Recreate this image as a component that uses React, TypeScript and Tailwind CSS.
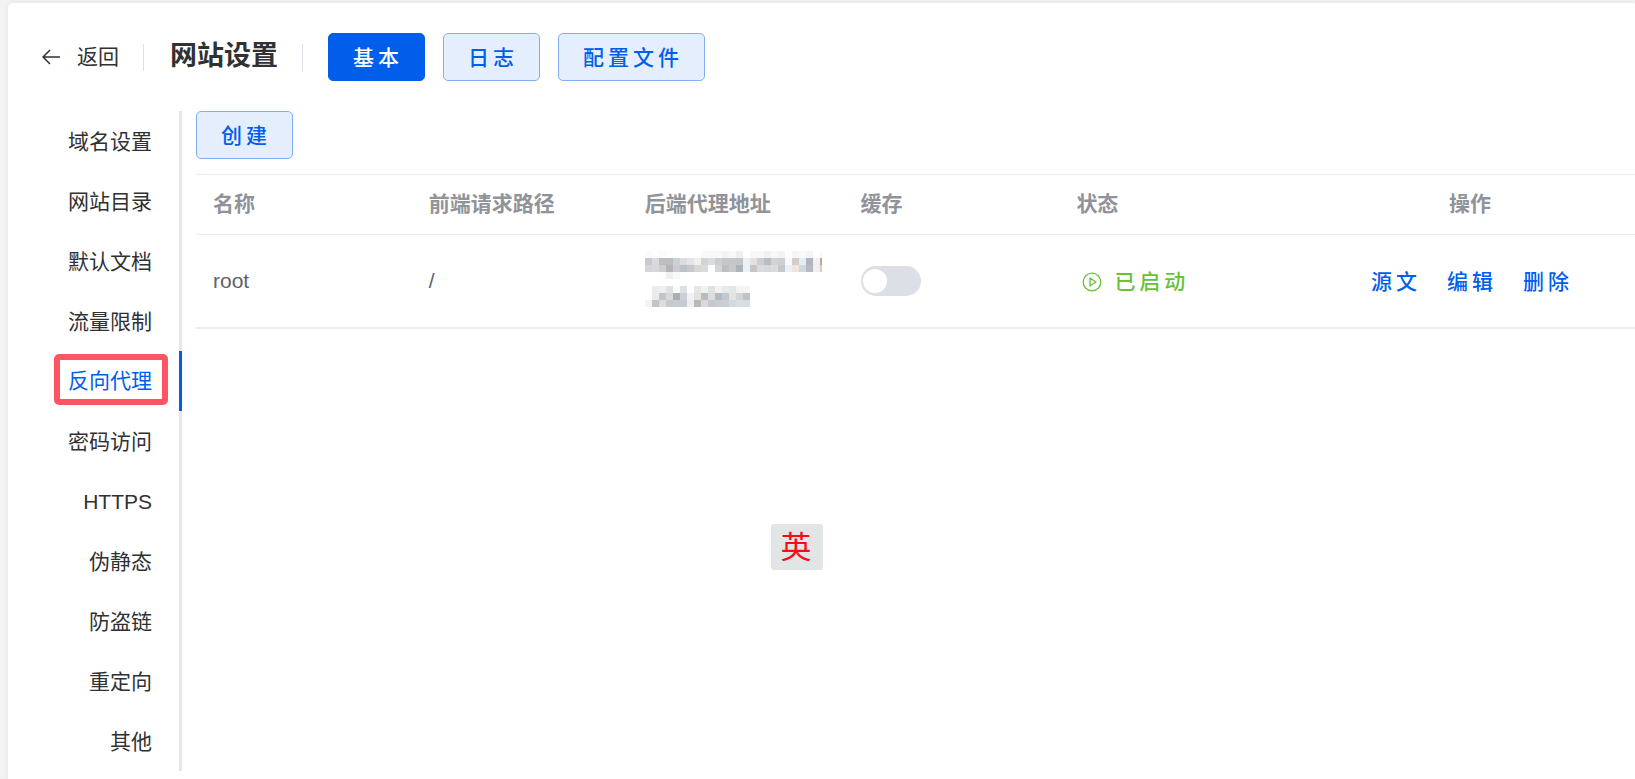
import { useState } from "react";

const sections = ["域名设置", "网站目录", "默认文档", "流量限制", "反向代理", "密码访问", "HTTPS", "伪静态", "防盗链", "重定向", "其他"];
const tabs = ["基本", "日志", "配置文件"];
const columns = ["名称", "前端请求路径", "后端代理地址", "缓存", "状态"];
const actions = ["源文", "编辑", "删除"];

const buttonBase = "h-12 rounded-[5px] border pt-px pr-[21px] pl-6 text-[21px] leading-6 font-medium tracking-[4px]";
const buttonPrimary = "border-[#005eeb] bg-[#005eeb] text-white";
const buttonPlain = "border-[#80aff5] bg-[#e5eefd] text-[#005eeb]";

/* Masked address: one string per row of 7px cells, "." is an empty cell. */
const maskRows = [
  "fafafa . fafafa fdfdfd . . . . f9f9f9 f9f9f9 f9f9f9 f3f3f4 f8f8f8 eeefef . f7f7f7 f8f8f8 f0f2f2 f8f8f8 f1f3f3 . f5f5f6 fafafa f2f5f6 . f7f7f7",
  "c9cacc d8dadf bfbcbe babdc3 ccd0d5 dcdcde e3e5e8 efefee d4d4d4 d9dde2 cccfd4 c6c7c9 c6c7c9 c3c6c9 eaf1f6 e2e2e1 cbcdd2 bdbcc2 d1d2d5 cdcfd1 f5fafc d3ccca e5edf4 b0b4bf f0f0ef b8a898",
  "d4d5d6 d6d9db cdccce b8b3b9 c7cdd3 bcc2c7 c4c9d0 d9d6d4 d6dce2 . d3d5db c0bfc0 c6c8cc adb2bb ebf2f6 c8c6c4 d5dce4 d6d8dc dcdcdb c3c8cd ebf0f4 eee5e1 d1d8e0 b5bac0 eef0f1 dccbb6",
  ". . . f2eeee f2fafc",
  "",
  ". ebecec edeff2 e0e2e2 f9fbfb dde1e4 . e6e6e4 f0f3f4 dfe1e2 f4f2f1 e6eaed e4e6e8 f3f3f4 f4f4f5",
  ". ebebeb c6c5c3 d7d9dd abaeb5 cbd1d6 f1f2f6 e2e2e2 babbbc dcdedd b2bac8 c3c8d0 e3e3e1 d0d4d9 bfc2c8",
  "f1f3f4 c3c4c5 dcdddd c8c9ca c8cbd0 c7cad1 eceef2 b8b9ba d9d9da c6c8cc c9ccd1 cbced2 d5d8dc dadde1 dadde0",
];

function MaskedAddress() {
  return (
    <svg viewBox="0 0 177 56" className="h-14 w-[177px]" shapeRendering="crispEdges" aria-hidden="true">
      {maskRows.flatMap((row, y) =>
        row.split(" ").map((cell, x) =>
          cell.length === 6 ? <rect key={`${x}-${y}`} x={x * 7} y={y * 7} width="7" height="7" fill={`#${cell}`} /> : null,
        ),
      )}
    </svg>
  );
}

function PlayIcon() {
  return (
    <svg viewBox="0 0 20 20" className="size-5" fill="none" stroke="currentColor" strokeWidth="1.3" strokeLinejoin="round">
      <circle cx="10" cy="10" r="8.8" />
      <path d="M8 6v8l6-4z" />
    </svg>
  );
}

export default function App() {
  const [section, setSection] = useState("反向代理");
  const [tab, setTab] = useState("基本");
  const [cached, setCached] = useState(false);

  return (
    <div className="relative min-h-screen overflow-hidden bg-[#f3f3f4] pt-[3px] pl-2 font-['Liberation_Sans','Noto_Sans_CJK_SC',sans-serif] text-[21px] leading-6 text-[#303133]">
      <main className="min-h-[calc(100vh-3px)] rounded-tl-[5px] bg-white shadow-[0_0_6px_rgba(0,40,120,0.08)]">
        <header className="flex h-27 items-center pl-[34px]">
          <button className="flex items-center gap-[17px]">
            <svg viewBox="0 0 18 16" className="h-4 w-[18px]" fill="none" stroke="currentColor" strokeWidth="1.5">
              <path d="M18 8H1M8 1 1 8l7 7" />
            </svg>
            返回
          </button>
          <span className="ml-6 h-[27px] w-px bg-[#dcdfe6]" />
          <h1 className="mb-0.5 ml-[26px] text-[27px] leading-8 font-bold">网站设置</h1>
          <span className="ml-6 h-[27px] w-px bg-[#dcdfe6]" />
          <nav className="ml-[25px] flex gap-[18px]">
            {tabs.map((t) => (
              <button key={t} onClick={() => setTab(t)} className={`${buttonBase} ${t === tab ? buttonPrimary : buttonPlain}`}>
                {t}
              </button>
            ))}
          </nav>
        </header>

        <div className="flex items-start">
          <nav className="flex w-[174px] shrink-0 flex-col">
            {sections.map((s) => (
              <button
                key={s}
                onClick={() => setSection(s)}
                className={`flex h-15 items-center justify-end border-r-[3px] ${
                  s === section ? "border-[#005eeb] pr-[11px] pb-1 text-[#005eeb]" : "border-[#e4e7ed] pt-0.5 pr-[27px]"
                }`}
              >
                {s === section ? (
                  <span className="flex h-[51px] items-center rounded-[5px] border-6 border-[#ff5562] pt-1 pr-2.5 pl-2">{s}</span>
                ) : (
                  s
                )}
              </button>
            ))}
          </nav>

          <section className="min-w-0 flex-1 pl-[14px]">
            <button className={`${buttonBase} ${buttonPlain}`}>创建</button>
            <table className="mt-[15px] w-full table-fixed border-separate border-spacing-0 text-left">
              <thead className="text-[#909399]">
                <tr>
                  {columns.map((c) => (
                    <th key={c} className="h-[61px] w-[15%] border-y border-[#ebeef5] p-0 pb-0.5 pl-[17px] font-bold">
                      {c}
                    </th>
                  ))}
                  <th className="h-[61px] border-y border-[#ebeef5] p-0 pb-0.5 pl-[30px] text-center font-bold">操作</th>
                </tr>
              </thead>
              <tbody className="text-[#606266]">
                <tr>
                  <td className="h-[94px] border-b-2 border-[#ebeef5] p-0 pl-[17px]">root</td>
                  <td className="border-b-2 border-[#ebeef5] p-0 pl-[17px]">/</td>
                  <td className="border-b-2 border-[#ebeef5] p-0 pb-1 pl-[17px]">
                    <MaskedAddress />
                  </td>
                  <td className="border-b-2 border-[#ebeef5] p-0 pl-[17px]">
                    <input
                      type="checkbox"
                      role="switch"
                      aria-label="缓存"
                      checked={cached}
                      onChange={(e) => setCached(e.target.checked)}
                      className="block h-[30px] w-[60px] appearance-none rounded-full bg-[#dcdfe6] py-[3px] pr-0.5 pl-0.5 before:block before:size-6 before:rounded-full before:bg-white checked:bg-[#005eeb] checked:before:ml-auto"
                    />
                  </td>
                  <td className="border-b-2 border-[#ebeef5] p-0 pl-[17px]">
                    <button className="flex items-center gap-3 pt-0.5 pl-1.5 font-medium tracking-[4px] text-[#67c23a]">
                      <PlayIcon />
                      已启动
                    </button>
                  </td>
                  <td className="border-b-2 border-[#ebeef5] p-0 pl-[34px]">
                    <div className="flex justify-center gap-[26px] pt-0.5 text-[#005eeb]">
                      {actions.map((a) => (
                        <button key={a} className="font-medium tracking-[4px]">
                          {a}
                        </button>
                      ))}
                    </div>
                  </td>
                </tr>
              </tbody>
            </table>
          </section>
        </div>
      </main>
      <div className="absolute top-[524px] left-[771px] flex h-[46px] w-[52px] items-center justify-center rounded-[3px] bg-[#e1e5e5] pr-0.5 pt-0.5 text-[31px] text-[#ff0a14]">
        英
      </div>
    </div>
  );
}
